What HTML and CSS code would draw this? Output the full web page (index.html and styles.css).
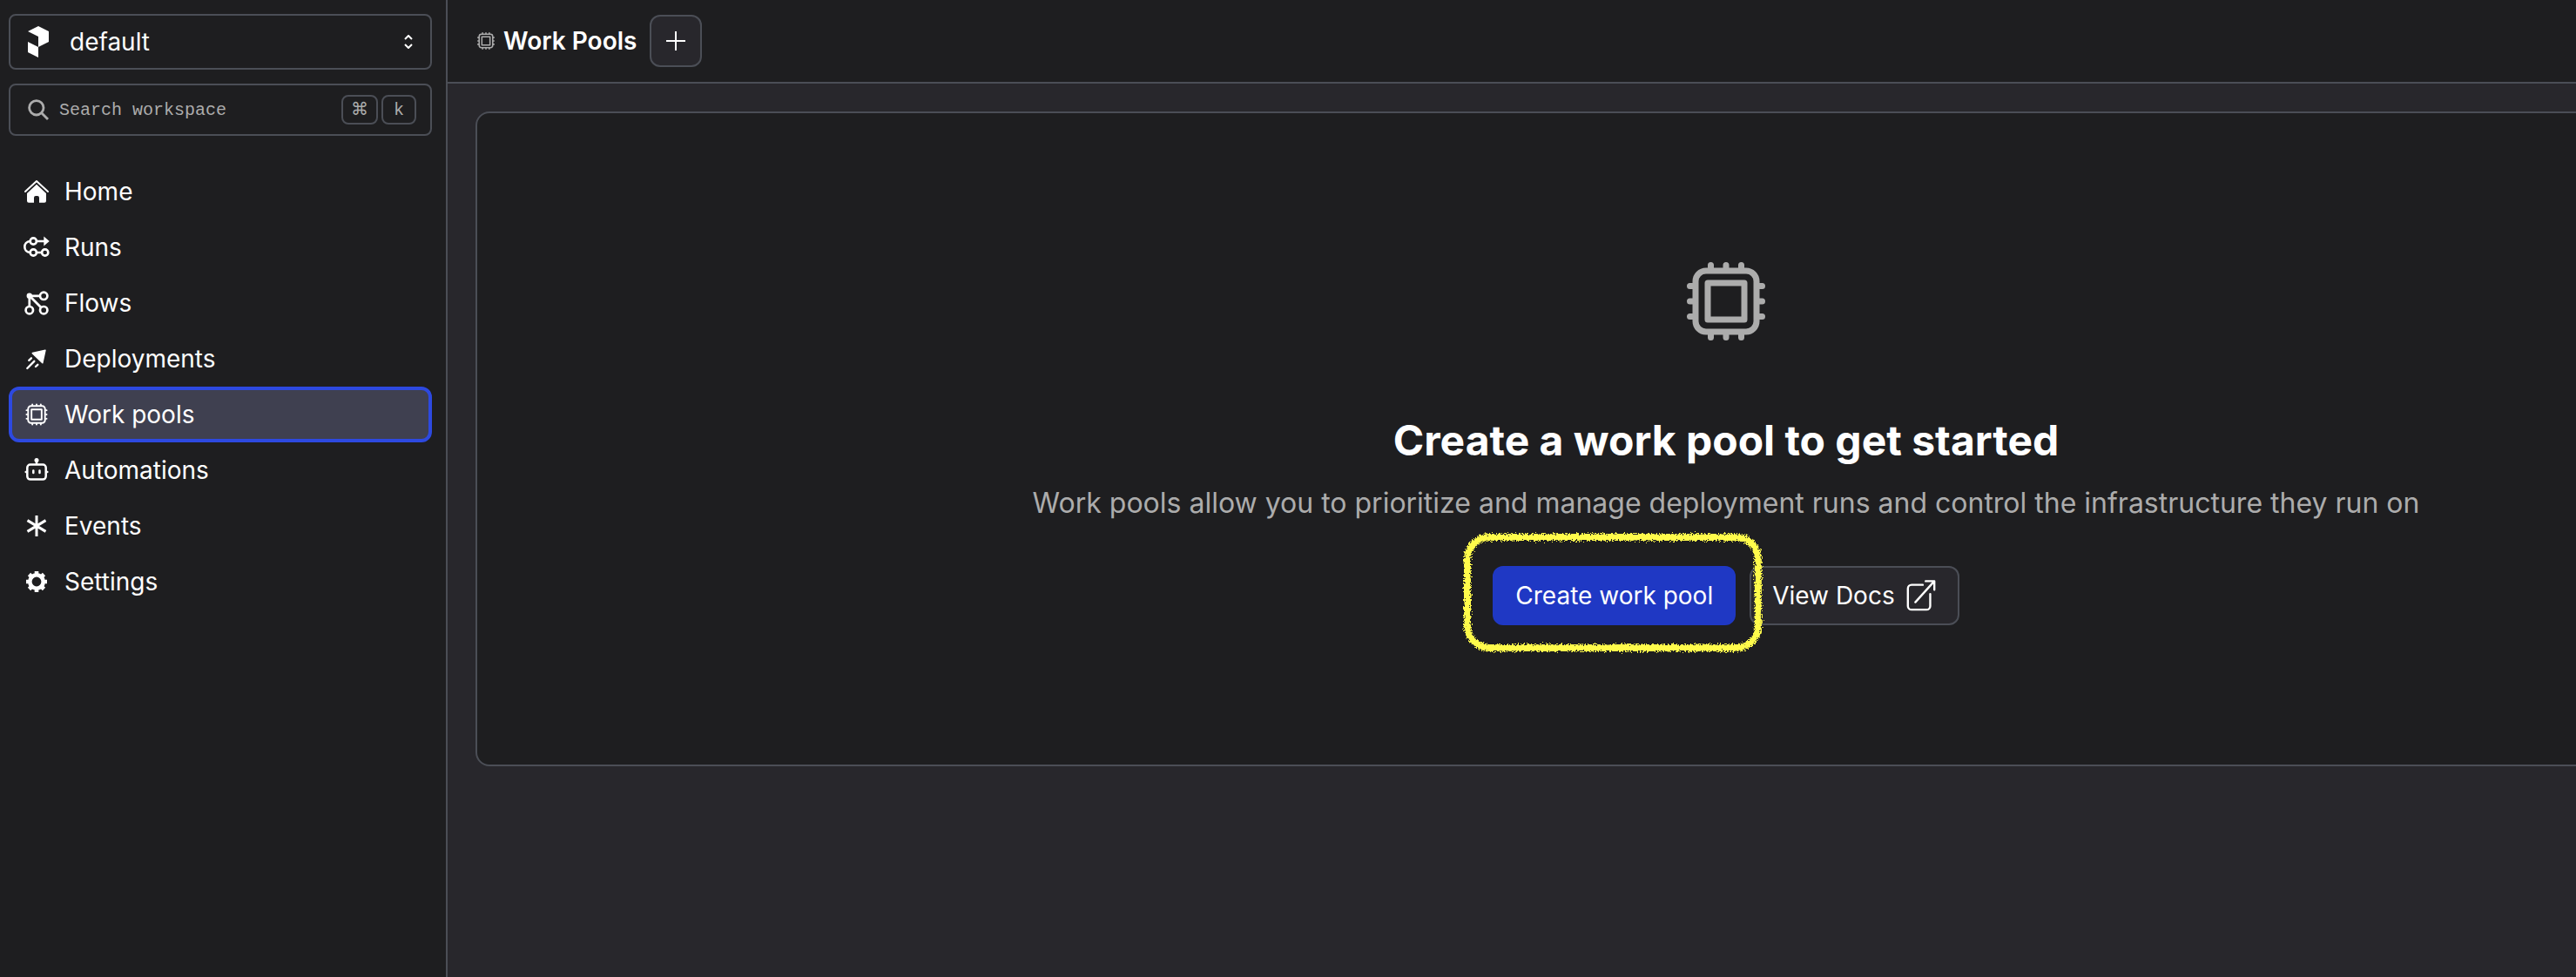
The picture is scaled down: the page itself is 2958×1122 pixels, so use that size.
FILE: index.html
```html
<!DOCTYPE html>
<html lang="en">
<head>
<meta charset="utf-8">
<meta name="viewport" content="width=device-width, initial-scale=1">
<title>Work Pools</title>
<link rel="stylesheet" href="styles.css">
</head>
<body>
<svg class="defs" aria-hidden="true">
  <symbol id="chip" viewBox="0 0 112 112">
    <g fill="none" stroke="currentColor" stroke-width="7" stroke-linecap="round" stroke-linejoin="round">
      <rect x="21" y="21" width="70" height="70" rx="12"/>
      <rect x="35" y="35" width="42" height="42"/>
      <path d="M38.500 14.500v5M56 14.500v5M73.500 14.500v5M38.500 92.500v5M56 92.500v5M73.500 92.500v5M14.500 38.500h5M14.500 56h5M14.500 73.500h5M92.500 38.500h5M92.500 56h5M92.500 73.500h5"/>
    </g>
  </symbol>
  <filter id="crayon" x="-5%" y="-10%" width="110%" height="120%">
    <feTurbulence type="fractalNoise" baseFrequency="0.6" numOctaves="2" seed="4" result="noise"/>
    <feDisplacementMap in="SourceGraphic" in2="noise" scale="8" xChannelSelector="R" yChannelSelector="G"/>
  </filter>
</svg>
<div class="app">
  <aside class="sidebar">
    <div class="workspace">
      <svg class="logo" viewBox="0 0 24 36" aria-hidden="true"><path fill="currentColor" d="M12 0l12 6v12l-12 6V12L0 6zM0 18l12 6v12L0 30z"/></svg>
      <select class="workspace-select" aria-label="Workspace"><option>default</option></select>
      <svg class="updown" viewBox="0 0 10 16" aria-hidden="true"><path fill="none" stroke="currentColor" stroke-width="2" d="M1 5l4-4 4 4M1 11l4 4 4-4"/></svg>
    </div>
    <label class="search">
      <svg class="search-icon" viewBox="0 0 24 24" aria-hidden="true"><g fill="none" stroke="currentColor" stroke-width="2.800"><circle cx="9.800" cy="9.800" r="8.200"/><path d="M15.500 15.500l7.500 7.500"/></g></svg>
      <input class="search-input" type="text" placeholder="Search workspace" aria-label="Search workspace">
      <span class="keys"><kbd class="key key-cmd">⌘</kbd><kbd class="key">k</kbd></span>
    </label>
    <nav class="nav">
      <a class="nav-item" href="#home">
        <svg class="nav-icon" viewBox="0 0 30 30" aria-hidden="true"><path fill="none" stroke="currentColor" stroke-width="2" stroke-linecap="round" stroke-linejoin="round" d="M2 15L15 3l13 12"/><path fill="currentColor" d="M15 6.700l11 10.300v8.700a2 2 0 0 1-2 2h-6V22a2 2 0 0 0-2-2h-2a2 2 0 0 0-2 2v5.700H6a2 2 0 0 1-2-2V17z"/></svg>
        Home</a>
      <a class="nav-item" href="#runs">
        <svg class="nav-icon" viewBox="0 0 30 30" aria-hidden="true"><g fill="none" stroke="currentColor" stroke-width="2.600"><circle cx="11.300" cy="8" r="3.600"/><circle cx="11.300" cy="21" r="3.600"/><circle cx="24.700" cy="21" r="3.600"/><path d="M15 8h9M15 21h6M7.700 8C-.800 8.500-.800 20.500 7.700 21"/></g><path fill="currentColor" d="M23.300 2.500l6.400 5.500-6.400 5.500z"/></svg>
        Runs</a>
      <a class="nav-item" href="#flows">
        <svg class="nav-icon" viewBox="0 0 30 30" aria-hidden="true"><g fill="none" stroke="currentColor" stroke-width="2.700"><circle cx="23.200" cy="6.800" r="4.200"/><circle cx="6.800" cy="23.200" r="4.200"/><circle cx="23.200" cy="23.200" r="4.200"/><path d="M6.800 6.800H19M6.800 6.800V19M6.800 6.800l13.500 13.500"/></g><circle cx="6.800" cy="6.800" r="3.200" fill="currentColor"/></svg>
        Flows</a>
      <a class="nav-item" href="#deployments">
        <svg class="nav-icon" viewBox="0 0 30 30" aria-hidden="true"><path fill="currentColor" stroke="currentColor" stroke-width="1.500" stroke-linejoin="round" d="M10.300 8.600L25 5.200l-3.200 14.600z"/><path fill="none" stroke="currentColor" stroke-width="2.400" stroke-linecap="round" d="M4.300 26l8-8.200M6.300 16.800l2.600-2.500M14 24l2.300-2.200"/></svg>
        Deployments</a>
      <a class="nav-item nav-item-active" href="#work-pools" aria-current="page">
        <svg class="nav-icon" viewBox="2 2 108 108" aria-hidden="true"><use href="#chip" width="112" height="112"/></svg>
        Work pools</a>
      <a class="nav-item" href="#automations">
        <svg class="nav-icon" viewBox="0 0 30 30" aria-hidden="true"><g fill="none" stroke="currentColor" stroke-width="2.500"><rect x="4.300" y="8.600" width="21.400" height="17" rx="3.500"/><path d="M15 4v5"/><path stroke-linecap="round" d="M2.700 17h1M26.300 17h1M11.300 15.500v2.500M18.500 15.500v2.500"/></g><circle cx="15" cy="3.600" r="2.500" fill="currentColor"/></svg>
        Automations</a>
      <a class="nav-item" href="#events">
        <svg class="nav-icon" viewBox="0 0 30 30" aria-hidden="true"><path fill="none" stroke="currentColor" stroke-width="3" d="M15 3v24M4.500 8.600l21 12.800M25.500 8.600l-21 12.800"/></svg>
        Events</a>
      <a class="nav-item" href="#settings">
        <svg class="nav-icon" viewBox="0 0 30 30" aria-hidden="true"><g fill="none" stroke="currentColor"><circle cx="15" cy="15" r="7.700" stroke-width="4.600"/><path stroke-width="4.600" d="M15 3v4M15 23v4M3 15h4M23 15h4M6.500 6.500l3 3M20.500 20.500l3 3M23.500 6.500l-3 3M9.500 20.500l-3 3"/></g></svg>
        Settings</a>
    </nav>
  </aside>
  <div class="content">
    <header class="header">
      <svg class="header-icon" viewBox="11 11 90 90" aria-hidden="true"><use href="#chip" width="112" height="112"/></svg>
      <h1 class="header-title">Work Pools</h1>
      <button class="add-button" type="button" aria-label="Create work pool">
        <svg class="plus" viewBox="0 0 22 22" aria-hidden="true"><path fill="none" stroke="currentColor" stroke-width="2" d="M11 0v22M0 11h22"/></svg>
      </button>
    </header>
    <main class="main">
      <section class="empty">
        <svg class="empty-icon" aria-hidden="true"><use href="#chip"/></svg>
        <h2 class="empty-title">Create a work pool to get started</h2>
        <p class="empty-text">Work pools allow you to prioritize and manage deployment runs and control the infrastructure they run on</p>
        <div class="actions">
          <div class="highlighted">
            <button class="button button-primary" type="button">Create work pool</button>
            <svg class="highlight" aria-hidden="true"><rect class="highlight-stroke" rx="25"/></svg>
          </div>
          <a class="button button-outline" href="#docs">View Docs
            <svg class="external" viewBox="0 0 36 40" aria-hidden="true"><path fill="none" stroke="currentColor" stroke-width="2.500" stroke-linecap="round" stroke-linejoin="round" d="M20 7H6.500A4.500 4.500 0 0 0 2 11.500v21A4.500 4.500 0 0 0 6.500 37h18a4.500 4.500 0 0 0 4.500-4.500V18M11 28L33.500 3M23.500 2.500H34V13"/></svg>
          </a>
        </div>
      </section>
    </main>
  </div>
</div>
</body>
</html>
```
FILE: styles.css
```css
* {
  box-sizing: border-box;
}

:root {
  --surface: #1e1e20;
  --raised: #28272c;
  --line: #4b4e56;
  --muted: #acacac;
}

body {
  margin: 0;
  background: var(--raised);
  color: #fff;
  font: 400 28px/40px Inter, "Liberation Sans", sans-serif;
}

svg {
  display: block;
  flex: none;
}

.defs {
  position: absolute;
  width: 0;
  height: 0;
}

.app {
  display: flex;
  min-height: 100vh;
}

.sidebar {
  flex: none;
  width: 514px;
  padding: 16px 16px 16px 10px;
  border-right: 2px solid var(--line);
  background: var(--surface);
}

.workspace,
.search {
  display: flex;
  align-items: center;
  border: 2px solid var(--line);
  border-radius: 8px;
}

.workspace {
  height: 64px;
  padding: 0 20px;
}

.logo {
  width: 24px;
  height: 36px;
}

.workspace-select {
  flex: 1;
  min-width: 0;
  padding: 0 0 0 24px;
  border: 0;
  appearance: none;
  background: none;
  color: inherit;
  font: inherit;
}

.updown {
  width: 10px;
  height: 16px;
}

.search {
  height: 60px;
  margin-top: 16px;
  padding: 0 16px 0 20px;
  gap: 12px;
  color: var(--muted);
}

.search-icon {
  width: 24px;
  height: 24px;
}

.search-input {
  flex: 1;
  min-width: 0;
  padding: 2px 0 0;
  border: 0;
  background: none;
  color: inherit;
  font: 20px/28px "Liberation Mono", monospace;
}

.search-input::placeholder {
  color: inherit;
  opacity: 1;
}

.keys {
  display: flex;
  gap: 4px;
}

.key {
  width: 40px;
  height: 34px;
  border: 2px solid var(--line);
  border-radius: 8px;
  font: 20px/32px "Liberation Mono", "DejaVu Sans Mono", monospace;
  text-align: center;
}

.key-cmd {
  width: 42px;
  font: 20px/28px "DejaVu Sans", sans-serif;
}

.nav {
  margin-top: 32px;
}

.nav-item {
  display: flex;
  align-items: center;
  gap: 17px;
  height: 64px;
  padding: 0 13px;
  border: 4px solid transparent;
  border-radius: 12px;
  color: inherit;
  text-decoration: none;
}

.nav-item-active {
  border-color: #2d49e0;
  background: #3f4050;
}

.nav-icon {
  width: 30px;
  height: 30px;
}

.content {
  flex: 1;
  min-width: 0;
  overflow: hidden;
}

.header {
  display: flex;
  align-items: center;
  gap: 10px;
  height: 96px;
  padding: 0 34px;
  border-bottom: 2px solid var(--line);
  background: var(--surface);
}

.header-icon {
  width: 20px;
  height: 20px;
  color: var(--muted);
}

.header-title {
  margin: 0;
  font-size: 28px;
  font-weight: 600;
}

.add-button {
  display: grid;
  place-items: center;
  width: 60px;
  height: 60px;
  margin-left: 5px;
  padding: 0;
  border: 2px solid var(--line);
  border-radius: 12px;
  background: var(--raised);
  color: inherit;
}

.plus {
  width: 22px;
  height: 22px;
}

.main {
  padding: 32px;
}

/* The panel runs on past the right edge of the window. */
.empty {
  display: flex;
  flex-direction: column;
  align-items: center;
  margin-right: -492px;
  padding: 160px 32px;
  border: 2px solid var(--line);
  border-radius: 16px;
  background: var(--surface);
}

.empty-icon {
  width: 112px;
  height: 112px;
  color: var(--muted);
}

.empty-title {
  margin: 76px 0 20px;
  font-size: 48px;
  font-weight: 700;
  line-height: 56px;
}

.empty-text {
  margin: 0;
  color: var(--muted);
  font-size: 32px;
  line-height: 48px;
}

.actions {
  display: flex;
  gap: 16px;
  margin-top: 48px;
}

.highlighted {
  position: relative;
}

.button {
  display: flex;
  align-items: center;
  height: 68px;
  padding: 0 24px;
  border: 2px solid var(--line);
  border-radius: 12px;
  color: inherit;
  font: inherit;
  text-decoration: none;
}

.button-primary {
  border-color: #1f38c4;
  background: #1f38c4;
}

.button-outline {
  gap: 12px;
  background: var(--raised);
}

.external {
  width: 36px;
  height: 38px;
}

.highlight {
  position: absolute;
  z-index: 1;
  inset: -38px -31px -31px -34px;
  width: calc(100% + 65px);
  height: calc(100% + 69px);
  overflow: visible;
  pointer-events: none;
}

.highlight-stroke {
  x: 5px;
  y: 5px;
  width: calc(100% - 10px);
  height: calc(100% - 10px);
  fill: none;
  stroke: #fffb4c;
  stroke-width: 8px;
  filter: url(#crayon);
}
```
